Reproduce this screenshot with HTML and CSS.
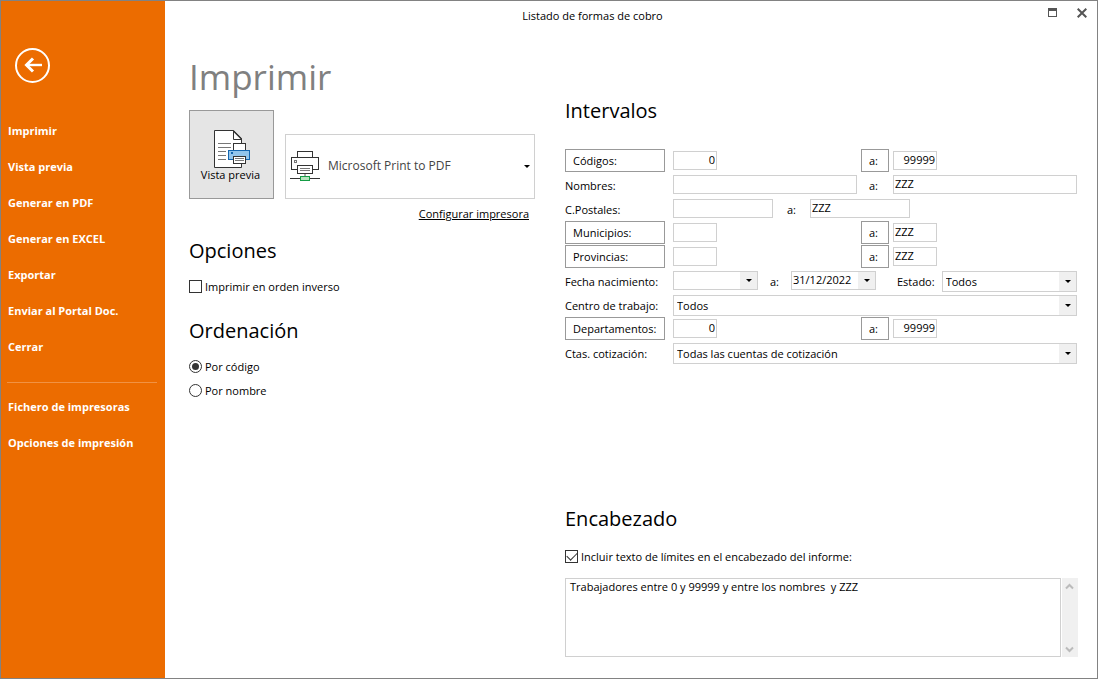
FILE: index.html
```
<!DOCTYPE html>
<html lang="es">
<head>
<meta charset="utf-8">
<title>Listado de formas de cobro</title>
<link rel="stylesheet" href="styles.css">
</head>
<body>
<div class="window">
  <aside class="sidebar">
    <button class="back" type="button" aria-label="Volver">
      <svg width="36" height="36" viewBox="0 0 36 36" fill="none" stroke="#fff">
        <circle cx="18.500" cy="18.500" r="16.5" stroke-width="2"/>
        <path d="M28 18H12" stroke-width="2.4"/>
        <path d="M19 11.500L12.500 18L19 24.500" stroke-width="3"/>
      </svg>
    </button>
    <nav class="menu">
      <a href="#">Imprimir</a>
      <a href="#">Vista previa</a>
      <a href="#">Generar en PDF</a>
      <a href="#">Generar en EXCEL</a>
      <a href="#">Exportar</a>
      <a href="#">Enviar al Portal Doc.</a>
      <a href="#">Cerrar</a>
    </nav>
    <hr class="divider">
    <nav class="menu">
      <a href="#">Fichero de impresoras</a>
      <a href="#">Opciones de impresión</a>
    </nav>
  </aside>

  <div class="page">
    <header class="titlebar">
      <span class="title">Listado de formas de cobro</span>
      <div class="controls">
        <button type="button" aria-label="Maximizar">
          <svg width="9" height="9" viewBox="0 0 9 9"><path d="M0 0H9V9H0ZM1 3V8H8V3Z" fill="#555" fill-rule="evenodd"/></svg>
        </button>
        <button type="button" aria-label="Cerrar">
          <svg width="10" height="10" viewBox="0 0 10 10"><path d="M0.7 0.7L9.3 9.3M9.3 0.7L0.7 9.3" stroke="#555" stroke-width="2"/></svg>
        </button>
      </div>
    </header>

    <main class="content">
      <section class="left">
        <h1>Imprimir</h1>
        <div class="print-row">
          <button class="preview" type="button">
            <svg width="37" height="39" viewBox="0 0 37 39" fill="none">
              <path d="M0.500 0.500H19.500L27.500 8.500V37.500H0.500Z" fill="#fff" stroke="#333"/>
              <path d="M19.500 0.500V9.500H27.500" stroke="#333"/>
              <path d="M19.500 1L27.500 9" stroke="#333" stroke-width="1.5"/>
              <path d="M4 13.500H17M4 17.500H17M4 21.500H12M4 25.500H12M4 29.500H12" stroke="#777"/>
              <rect x="19.500" y="13.500" width="12" height="8" fill="#fff" stroke="#333"/>
              <rect x="14.500" y="20.500" width="21" height="9" fill="#92c5ec" stroke="#1466b0"/>
              <rect x="17" y="22" width="2" height="2" fill="#1466b0"/>
              <rect x="19.500" y="26.500" width="12" height="7" fill="#fff" stroke="#333"/>
              <path d="M21 28.500H30M21 30.500H30" stroke="#777"/>
            </svg>
            <span>Vista previa</span>
          </button>
          <div class="printer">
            <svg width="30" height="31" viewBox="0 0 30 31" fill="none">
              <rect x="7.500" y="0.500" width="15" height="7" fill="#fff" stroke="#333"/>
              <rect x="1.500" y="6.500" width="27" height="12" fill="#fff" stroke="#333"/>
              <rect x="4.500" y="9.500" width="2" height="2" stroke="#777"/>
              <rect x="7.500" y="14.500" width="15" height="8" fill="#fff" stroke="#333"/>
              <path d="M10 17.500H20M10 19.500H20" stroke="#777"/>
              <path d="M15 23V25" stroke="#aaa" stroke-width="2"/>
              <path d="M0 27.500H30" stroke="#333"/>
              <rect x="10.500" y="25.500" width="9" height="4" fill="#b5e3bd" stroke="#159c45"/>
            </svg>
            <div class="combo">
              <select aria-label="Impresora"><option>Microsoft Print to PDF</option></select>
              <span class="arrow"></span>
            </div>
          </div>
        </div>
        <a class="configure" href="#">Configurar impresora</a>

        <h2>Opciones</h2>
        <label class="check"><input type="checkbox">Imprimir en orden inverso</label>

        <h2 class="second">Ordenación</h2>
        <label class="check"><input type="radio" name="orden" checked>Por código</label>
        <label class="check"><input type="radio" name="orden">Por nombre</label>
      </section>

      <section class="right">
        <h2>Intervalos</h2>
        <form class="ranges">
          <div class="row">
            <button class="pick" type="button">Códigos:</button>
            <div class="range">
              <input class="code number" type="text" value="0" aria-label="Código inicial">
              <button class="to" type="button">a:</button>
              <input class="code number" type="text" value="99999" aria-label="Código final">
            </div>
          </div>
          <div class="row">
            <label for="nombre1">Nombres:</label>
            <div class="range">
              <input id="nombre1" type="text">
              <label class="to-text" for="nombre2">a:</label>
              <input id="nombre2" type="text" value="ZZZ">
            </div>
          </div>
          <div class="row">
            <label for="postal1">C.Postales:</label>
            <div class="line">
              <input class="postal" id="postal1" type="text">
              <label class="to-postal" for="postal2">a:</label>
              <input class="postal" id="postal2" type="text" value="ZZZ">
            </div>
          </div>
          <div class="row">
            <button class="pick" type="button">Municipios:</button>
            <div class="range">
              <input class="code" type="text" aria-label="Municipio inicial">
              <button class="to" type="button">a:</button>
              <input class="code" type="text" value="ZZZ" aria-label="Municipio final">
            </div>
          </div>
          <div class="row">
            <button class="pick" type="button">Provincias:</button>
            <div class="range">
              <input class="code" type="text" aria-label="Provincia inicial">
              <button class="to" type="button">a:</button>
              <input class="code" type="text" value="ZZZ" aria-label="Provincia final">
            </div>
          </div>
          <div class="row">
            <label for="fecha1">Fecha nacimiento:</label>
            <div class="line">
              <div class="date"><input id="fecha1" type="text"><button class="drop" type="button" aria-label="Elegir fecha inicial"><span class="arrow"></span></button></div>
              <label class="to-date" for="fecha2">a:</label>
              <div class="date"><input id="fecha2" type="text" value="31/12/2022"><button class="drop" type="button" aria-label="Elegir fecha final"><span class="arrow"></span></button></div>
              <label class="state" for="estado">Estado:</label>
              <div class="combo boxed">
                <select id="estado"><option>Todos</option></select>
                <span class="drop"><span class="arrow"></span></span>
              </div>
            </div>
          </div>
          <div class="row">
            <label for="centro">Centro de trabajo:</label>
            <div class="combo boxed">
              <select id="centro"><option>Todos</option></select>
              <span class="drop"><span class="arrow"></span></span>
            </div>
          </div>
          <div class="row">
            <button class="pick" type="button">Departamentos:</button>
            <div class="range">
              <input class="code number" type="text" value="0" aria-label="Departamento inicial">
              <button class="to" type="button">a:</button>
              <input class="code number" type="text" value="99999" aria-label="Departamento final">
            </div>
          </div>
          <div class="row">
            <label for="ctas">Ctas. cotización:</label>
            <div class="combo boxed">
              <select id="ctas"><option>Todas las cuentas de cotización</option></select>
              <span class="drop"><span class="arrow"></span></span>
            </div>
          </div>
        </form>

        <div class="heading-block">
          <h2>Encabezado</h2>
          <label class="check"><input type="checkbox" checked>Incluir texto de límites en el encabezado del informe:</label>
          <div class="memo">
            <textarea aria-label="Texto del encabezado">Trabajadores entre 0 y 99999 y entre los nombres  y ZZZ</textarea>
            <div class="scroll">
              <button type="button" aria-label="Subir"><svg width="9" height="7" viewBox="0 0 9 7"><path d="M1 5.500L4.500 2L8 5.500" fill="none" stroke="#bbb" stroke-width="2"/></svg></button>
              <button type="button" aria-label="Bajar"><svg width="9" height="7" viewBox="0 0 9 7"><path d="M1 1.500L4.500 5L8 1.500" fill="none" stroke="#bbb" stroke-width="2"/></svg></button>
            </div>
          </div>
        </div>
      </section>
    </main>
  </div>
</div>
</body>
</html>
```
FILE: styles.css
```
* {
  box-sizing: border-box;
}

body {
  margin: 0;
  font: 11px/16px "Open Sans", "Noto Sans", sans-serif;
  color: #000;
  background: #fff;
}

button,
input,
select,
textarea {
  margin: 0;
  font: inherit;
  color: inherit;
}

button {
  padding: 0;
  border: 0;
  background: none;
}

svg {
  display: block;
}

h1,
h2 {
  margin: 0;
  font-weight: 400;
}

h1 {
  font-size: 35px;
  line-height: 48px;
  color: #808080;
}

h2 {
  font-size: 20px;
  line-height: 28px;
}

.window {
  display: flex;
  min-height: 100vh;
  border: 1px solid #828282;
}

/* Sidebar */
.sidebar {
  flex: none;
  width: 164px;
  padding: 46px 8px 0 6px;
  background: #ec6c00;
}

.back {
  display: block;
  margin: 0 0 30px 7px;
}

.menu {
  display: flex;
  flex-direction: column;
  padding-left: 1px;
}

.menu a {
  line-height: 36px;
  font-weight: 700;
  color: #fff;
  text-decoration: none;
}

.divider {
  height: 1px;
  margin: 17px 0 6px;
  border: 0;
  background: #f19243;
}

/* Title bar */
.page {
  flex: 1;
  display: flex;
  flex-direction: column;
  min-width: 0;
}

.titlebar {
  display: flex;
  height: 30px;
}

.title {
  flex: 1;
  line-height: 30px;
  text-align: center;
}

.controls {
  display: flex;
  justify-content: flex-end;
  align-items: flex-start;
  gap: 20px;
  width: 77px;
  padding: 7px 10px 0 0;
}

/* Content */
.content {
  flex: 1;
  display: flex;
  gap: 30px;
  padding: 0 20px 21px 24px;
}

.left {
  display: flex;
  flex-direction: column;
  width: 346px;
  padding-top: 22px;
}

.right {
  flex: 1;
  display: flex;
  flex-direction: column;
  padding-top: 66px;
}

.print-row {
  display: flex;
  align-items: flex-end;
  gap: 11px;
  margin-top: 9px;
}

.preview {
  display: flex;
  flex-direction: column;
  align-items: center;
  width: 85px;
  height: 89px;
  padding: 19px 2px 0 0;
  border: 1px solid #999;
  background: #e5e5e5;
}

.preview svg {
  margin: 0 0 -2px 4px;
}

.printer {
  flex: 1;
  display: flex;
  align-items: center;
  height: 65px;
  padding-left: 4px;
  border: 1px solid #d0d0d0;
  color: #444;
}

.printer .combo {
  flex: 1;
}

.printer select {
  height: 32px;
  padding: 0 0 2px 8px;
  font-size: 12px;
}

.printer .arrow {
  margin-right: 4px;
}

.configure {
  align-self: flex-end;
  margin: 7px 6px 15px 0;
  color: #000;
}

.second {
  margin-top: 18px;
}

.check {
  display: flex;
  align-items: center;
  gap: 3px;
  height: 24px;
}

.left h2 {
  margin-bottom: 10px;
}

.check input {
  appearance: none;
  display: grid;
  place-items: center;
  width: 13px;
  height: 13px;
  margin-bottom: 2px;
  border: 1px solid #333;
}

.check input[type="radio"] {
  border-radius: 50%;
}

.check input[type="radio"]:checked::before {
  content: "";
  width: 7px;
  height: 7px;
  border-radius: 50%;
  background: #333;
}

.check input[type="checkbox"]:checked::before {
  content: "";
  width: 9px;
  height: 5px;
  margin-bottom: 3px;
  border: solid #333;
  border-width: 0 0 1px 1px;
  transform: rotate(-45deg);
}

/* Ranges */
.ranges {
  margin-top: 24px;
}

.row {
  display: grid;
  grid-template-columns: 100px 1fr;
  column-gap: 8px;
  height: 24px;
}

.row label {
  padding-top: 5px;
}

.range {
  display: grid;
  grid-template-columns: 1fr 28px 1fr;
  column-gap: 4px;
}

.line {
  display: flex;
}

.pick,
.to {
  height: 23px;
  border: 1px solid #999;
}

.to {
  padding-right: 3px;
}

.pick {
  padding-left: 7px;
  text-align: left;
}

.row .to-text {
  padding-left: 8px;
}

.to-postal {
  width: 37px;
  text-align: center;
}

.to-date {
  width: 33px;
  text-align: center;
}

.row .state {
  margin: 0 7px 0 21px;
}

.row input {
  width: 100%;
  height: 19px;
  margin-top: 2px;
  padding: 0 1px 2px;
  border: 1px solid #d0d0d0;
  background: #fff;
}

.row .code {
  width: 44px;
}

.row .number {
  text-align: right;
}

.row .postal {
  width: 100px;
}

.date {
  display: flex;
  width: 85px;
  height: 19px;
  margin-top: 2px;
  border: 1px solid #d0d0d0;
}

.row .date input {
  flex: 1;
  min-width: 0;
  height: 17px;
  margin: 0;
  border: 0;
}

.combo {
  display: grid;
  grid-template-columns: minmax(0, 1fr);
  align-items: center;
}

.combo > * {
  grid-area: 1 / 1;
}

.combo > span {
  justify-self: end;
  pointer-events: none;
}

.combo select {
  appearance: none;
  width: 100%;
  border: 0;
  background: none;
}

.boxed {
  flex: 1;
  height: 21px;
  margin-top: 2px;
  border: 1px solid #d0d0d0;
}

.boxed select {
  height: 19px;
  padding: 0 18px 0 3px;
}

.drop {
  display: grid;
  place-items: center;
  flex: none;
  width: 17px;
  align-self: stretch;
  background: #f0f0f0;
}

.arrow {
  border: solid transparent;
  border-width: 3px 3px 0;
  border-top-color: #000;
}

/* Header text */
.heading-block {
  margin-top: auto;
}

.heading-block .check {
  margin-top: 12px;
}

.memo {
  display: flex;
  gap: 1px;
  height: 79px;
  margin: 9px -1px 0 0;
}

.memo textarea {
  flex: 1;
  padding: 0 4px;
  border: 1px solid #d0d0d0;
  resize: none;
  overflow: hidden;
}

.scroll {
  display: flex;
  flex-direction: column;
  justify-content: space-between;
  align-items: center;
  width: 16px;
  padding: 5px 1px 4px 0;
  background: #f0f0f0;
}
```
